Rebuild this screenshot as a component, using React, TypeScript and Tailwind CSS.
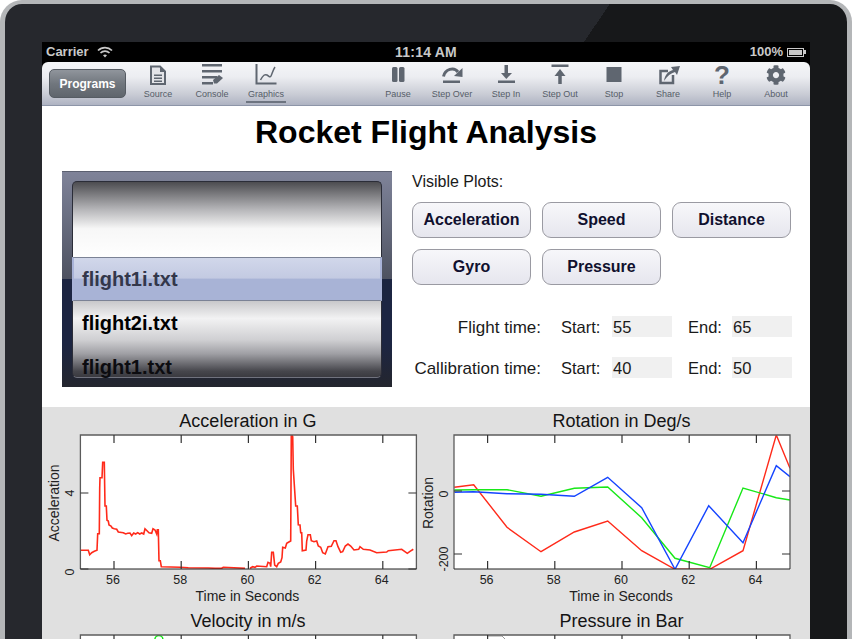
import type { ReactNode } from "react";
import { FaCog } from "react-icons/fa";

const toPlot = (pts: number[][], ox: number, oy: number) =>
  pts.map(([x, y]) => `${(ox + x / 3).toFixed(1)},${(oy + y / 3).toFixed(1)}`).join(" ");

// traced from the reference at 3x
const accelLeft = [[17,361],[40,361],[44,374],[50,368],[58,364],[66,361],[68,311],[73,311],[74,175],[75,143],[81,143],[83,97],[88,97],[90,228],[94,228],[96,271],[100,273],[102,285],[108,288],[112,294],[118,296],[125,298],[130,306],[145,308],[152,312],[158,310],[165,309],[170,317],[176,309],[182,312],[188,308],[194,312],[200,309],[206,312],[210,296],[216,302],[222,308],[230,310],[234,296],[240,300],[245,312],[247,299],[250,299],[252,392],[256,392],[259,410],[316,412],[340,413],[400,414],[420,415],[440,415],[445,412],[510,415]];
const accelRight = [[0,415],[8,410],[15,412],[20,408],[50,410],[54,397],[60,400],[62,410],[65,367],[70,367],[74,405],[80,410],[85,400],[92,396],[96,383],[98,352],[106,354],[110,340],[118,335],[122,333],[124,10],[128,20],[130,118],[137,228],[142,228],[145,284],[150,285],[152,308],[155,308],[157,362],[168,360],[170,333],[174,314],[181,314],[184,332],[192,335],[200,333],[205,348],[212,352],[218,368],[226,372],[234,350],[244,349],[252,332],[258,332],[264,350],[272,367],[278,365],[286,348],[294,342],[302,348],[312,360],[326,358],[330,350],[340,358],[360,360],[380,368],[410,366],[415,362],[455,358],[472,370],[480,364],[490,358]];
const rotRed = [[103,247],[161,239],[261,367],[363,440],[463,381],[563,348],[665,437],[765,493],[869,493],[969,437],[1069,90],[1110,190]];
const rotGreen = [[103,255],[161,254],[261,254],[363,274],[463,250],[563,246],[665,338],[765,460],[869,488],[969,249],[1069,278],[1110,285]];
const rotBlue = [[103,262],[161,260],[261,266],[363,268],[463,274],[563,217],[665,308],[765,493],[866,302],[969,413],[1069,182],[1110,215]];

interface PlotProps {
  title: string;
  left: number;
  yLabel?: string;
  yTicks?: { y: number; label: string; labelY: number }[];
  xLabels?: boolean;
  children?: ReactNode;
}

const Plot = ({ title, left, yLabel, yTicks = [], xLabels = true, children }: PlotProps) => {
  const xs = [56, 58, 60, 62, 64];
  return (
    <svg width="384" height="200" className="block overflow-visible" fontFamily="'Liberation Sans', sans-serif">
      <text x={left + 167.5} y="20" fontSize="18" textAnchor="middle" fill="#141414">{title}</text>
      <rect x={left} y="28" width="336" height="134" fill="#fff" />
      <svg x={left} y="28" width="336" height="134">{children}</svg>
      <path d={`M${left} 162V28H${left + 336}V162`} fill="none" stroke="#5c5c5c" strokeWidth="1.3" />
      <path d={`M${left} 162H${left + 336}`} stroke="#222" strokeWidth="1.2" />
      {xs.map((v, i) => {
        const x = left + 33.6 + i * 67.2;
        return (
          <g key={v}>
            <path d={`M${x} 28v8M${x} 162v-8`} stroke="#333" strokeWidth="1.2" />
            {xLabels && <text x={x - 1} y="177" fontSize="12.5" textAnchor="middle" fill="#222">{v}</text>}
          </g>
        );
      })}
      {yTicks.map((t) => (
        <g key={t.label}>
          <path d={`M${left} ${t.y}h8M${left + 336} ${t.y}h-8`} stroke="#333" strokeWidth="1.2" />
          <text transform={`translate(${left - 6} ${t.labelY}) rotate(-90)`} fontSize="12.5" textAnchor="middle" fill="#222">{t.label}</text>
        </g>
      ))}
      {yLabel && <text transform={`translate(${left - 21} 96) rotate(-90)`} fontSize="14" textAnchor="middle" fill="#222">{yLabel}</text>}
      {xLabels && <text x={left + 167} y="194" fontSize="14" textAnchor="middle" fill="#222">Time in Seconds</text>}
    </svg>
  );
};

const ToolIcon = ({ children }: { children: ReactNode }) => (
  <svg width="24" height="24" viewBox="0 0 24 24" fill="#5f6670" className="overflow-visible">{children}</svg>
);

const ToolItem = ({ label, active, children }: { label: string; active?: boolean; children: ReactNode }) => (
  <div className="flex w-[54px] flex-col items-center">
    <div className="flex h-[24px] w-[24px] items-center justify-center">{children}</div>
    <span className={`mt-[1px] whitespace-nowrap text-[9px] leading-[13px] text-[#565d68] ${active ? "border-b-2 border-[#6d7480] px-[2px]" : ""}`}>{label}</span>
  </div>
);

const StatusBar = () => (
  <div className="flex h-[20px] items-center bg-black px-[4px] text-[13px] font-bold text-[#c9c9c9]">
    <div className="flex flex-1 items-center gap-[8px]">
      <span>Carrier</span>
      <svg width="16" height="12" viewBox="0 0 16 12" fill="none" stroke="#c9c9c9" strokeWidth="1.7">
        <path d="M1 4.5a10 10 0 0 1 14 0M3.5 7a6.5 6.5 0 0 1 9 0" />
        <path d="M6 9.3a3 3 0 0 1 4 0L8 11.5z" fill="#c9c9c9" stroke="none" />
      </svg>
    </div>
    <span className="text-[14px] tracking-[0.2px]">11:14 AM</span>
    <div className="flex flex-1 items-center justify-end gap-[4px]">
      <span>100%</span>
      <div className="flex items-center">
        <div className="h-[9px] w-[17px] border border-[#c9c9c9] p-[1px]"><div className="h-full bg-[#c9c9c9]" /></div>
        <div className="h-[4px] w-[2px] bg-[#c9c9c9]" />
      </div>
    </div>
  </div>
);

const Toolbar = () => (
  <div className="h-[44px] bg-black">
    <div className="flex h-[44px] items-start rounded-t-[6px] border-b border-[#8d95a8] bg-[linear-gradient(#f5f6f8,#ecedf1_35%,#c9ccd5_75%,#aeb3c2)] pl-[7px] pr-[7px] pt-[1px]">
      <button className="mr-[5px] mt-[6px] flex h-[29px] w-[77px] items-center justify-center rounded-[5px] border border-[#565c63] bg-[linear-gradient(#90959c,#71777e_50%,#5f656c)] text-[12px] font-bold text-white">Programs</button>
      <ToolItem label="Source">
        <ToolIcon>
          <path d="M5 3.5h9l5 5V21H5z" fill="#e3e4e8" stroke="#5f6670" strokeWidth="2" />
          <path d="M14 3v6h6z" />
          <rect x="8" y="11.5" width="8" height="1.5" /><rect x="8" y="14.5" width="8" height="1.5" /><rect x="8" y="17.5" width="8" height="1.5" />
        </ToolIcon>
      </ToolItem>
      <ToolItem label="Console">
        <ToolIcon>
          <rect x="2" y="1" width="20" height="2.5" /><rect x="2" y="7" width="20" height="2.5" /><rect x="2" y="13" width="15" height="2.5" /><rect x="2" y="19" width="11" height="2.5" />
          <polygon points="14,20.5 13,17 19,12 23,15 17,20.5" />
        </ToolIcon>
      </ToolItem>
      <ToolItem label="Graphics" active>
        <ToolIcon>
          <path d="M2.5 1v19.5h20" fill="none" stroke="#5f6670" strokeWidth="2" />
          <path d="M6.5 17C9 12 11 11 13 12s3 3 4 1 2-6 4-9" fill="none" stroke="#5f6670" strokeWidth="1.5" />
        </ToolIcon>
      </ToolItem>
      <div className="flex-1" />
      <ToolItem label="Pause">
        <ToolIcon><rect x="6" y="4" width="5.5" height="15" rx="1.5" /><rect x="13" y="4" width="5.5" height="15" rx="1.5" /></ToolIcon>
      </ToolItem>
      <ToolItem label="Step Over">
        <ToolIcon>
          <path d="M3.5 13.5C5 6 14 3.5 18 9" fill="none" stroke="#5f6670" strokeWidth="3" />
          <polygon points="22.5,5 22.5,14 14,13" />
          <rect x="3" y="17.5" width="17" height="2.5" />
        </ToolIcon>
      </ToolItem>
      <ToolItem label="Step In">
        <ToolIcon>
          <rect x="10.5" y="2" width="3.5" height="9" /><polygon points="7,10 18,10 12.3,16" /><rect x="4" y="17.5" width="17" height="2.5" />
        </ToolIcon>
      </ToolItem>
      <ToolItem label="Step Out">
        <ToolIcon>
          <rect x="3.5" y="1.5" width="17" height="2.5" /><polygon points="12,6 17.5,13 6.5,13" /><rect x="10.25" y="12" width="3.5" height="9" />
        </ToolIcon>
      </ToolItem>
      <ToolItem label="Stop">
        <ToolIcon><rect x="4.5" y="4" width="15" height="15" /></ToolIcon>
      </ToolItem>
      <ToolItem label="Share">
        <ToolIcon>
          <path d="M17 12v8H4.5V8H12" fill="none" stroke="#5f6670" strokeWidth="2.5" />
          <path d="M8 18C9 11 13 8 17 7l-2-3 9-1-3 9-2-3c-4 1-8 4-11 9z" />
        </ToolIcon>
      </ToolItem>
      <ToolItem label="Help">
        <span className="text-[26px] font-bold leading-[24px] text-[#5f6670]">?</span>
      </ToolItem>
      <ToolItem label="About">
        <FaCog size={20} color="#5f6670" />
      </ToolItem>
    </div>
  </div>
);

const PlotButton = ({ label }: { label: string }) => (
  <button className="h-[36px] rounded-[9px] border border-[#9a9aa2] bg-[linear-gradient(#f7f7fa,#e6e6ee)] text-[16px] font-bold text-[#10102e]">{label}</button>
);

const TimeRow = ({ label, start, end }: { label: string; start: string; end: string }) => (
  <div className="flex h-[21px] items-center text-[16.5px] text-[#1a1a1a]">
    <span className="w-[129px] whitespace-nowrap pt-[2px] text-right text-[17px]">{label}</span>
    <span className="ml-[20px] w-[40px] pt-[2px]">Start:</span>
    <span className="ml-[11px] flex h-full w-[60px] items-center bg-[#f0f0f0] pl-[1px] pt-[2px]">{start}</span>
    <span className="ml-[16px] w-[34px] pt-[2px]">End:</span>
    <span className="ml-[10px] flex h-full w-[60px] items-center bg-[#f0f0f0] pl-[1px] pt-[2px]">{end}</span>
  </div>
);

const Picker = () => (
  <div className="h-[216px] w-[330px] shrink-0 border-t border-[#5b6070] bg-[linear-gradient(#7f8399,#6b7083_20%,#4d5160_50%,#1c2542_50%,#1c2542_80%,#24262e)] px-[10px] pb-[9px] pt-[9px]">
    <div className="relative h-[197px] rounded-[5px] border border-[#2b2d38] border-b-[#70727e] bg-[linear-gradient(#4c4c50,#b5b5b8_14%,#f7f7f7_24%,#ffffff_40%,#ffffff_56%,#c8c8ca_61%,#f2f2f3_70%,#cfcfd2_81%,#a0a0a5_88%,#46464c_97%,#3a3a40)]">
      <div className="h-[75px]" />
      <div className="flex h-[44px] items-center pl-[9px] text-[20px] font-bold text-[#2e3244]">flight1i.txt</div>
      <div className="flex h-[44px] items-center pl-[9px] text-[20px] font-bold text-black">flight2i.txt</div>
      <div className="flex h-[33px] items-start overflow-hidden pl-[9px] pt-[11px] text-[20px] font-bold leading-[22px] text-[#0c0c10]">flight1.txt</div>
      <div className="absolute -left-px -right-px top-[75px] flex h-[44px] items-center border-y border-x-2 border-y-[#7b8295] border-x-[#a9b3d8] bg-[linear-gradient(#d1d7ea,#c3cae2_48%,#a8b3d6_50%,#a8b3d6)] pl-[8px] text-[20px] font-bold text-[#33374b]">flight1i.txt</div>
    </div>
  </div>
);

export default function App() {
  return (
    <div className="h-[639px] w-[852px] overflow-hidden bg-white font-['Liberation_Sans',sans-serif]">
      <div className="h-full rounded-t-[22px] border-x-[5px] border-t-[4px] border-[#b4b6b8] bg-[linear-gradient(124deg,#26282d_47.6%,#17181a_47.6%)] px-[37px] pt-[38px]">
        <StatusBar />
        <Toolbar />
        <div className="h-[301px] bg-white">
          <h1 className="mb-[13px] flex h-[52px] items-center justify-center text-[32px] font-bold text-black">Rocket Flight Analysis</h1>
          <div className="flex px-[20px]">
            <Picker />
            <div className="ml-[20px]">
              <div className="mb-[9px] h-[22px] text-[16px] leading-[22px] text-[#1a1a1a]">Visible Plots:</div>
              <div className="grid grid-cols-[119px_119px_119px] gap-x-[11px] gap-y-[11px]">
                <PlotButton label="Acceleration" />
                <PlotButton label="Speed" />
                <PlotButton label="Distance" />
                <PlotButton label="Gyro" />
                <PlotButton label="Pressure" />
              </div>
              <div className="mt-[31px] flex flex-col gap-[20px]">
                <TimeRow label="Flight time:" start="55" end="65" />
                <TimeRow label="Callibration time:" start="40" end="50" />
              </div>
            </div>
          </div>
        </div>
        <div className="grid h-[232px] grid-cols-2 overflow-hidden bg-[#e0e0e0]">
          <Plot title="Acceleration in G" left={38.4} yLabel="Acceleration" yTicks={[{ y: 86, label: "4", labelY: 86 }, { y: 162, label: "0", labelY: 165 }]}>
            <g fill="none" stroke="#ff2a1a" strokeWidth="1.6">
              <polyline points={toPlot(accelLeft, -5.4, -5)} />
              <polyline points={toPlot(accelRight, 169.6, -5)} />
            </g>
          </Plot>
          <Plot title="Rotation in Deg/s" left={28} yLabel="Rotation" yTicks={[{ y: 84, label: "0", labelY: 87 }, { y: 147, label: "-200", labelY: 152 }]}>
            <g fill="none" strokeWidth="1.4">
              <polyline points={toPlot(rotRed, -34, -30)} stroke="#ff2a1a" />
              <polyline points={toPlot(rotGreen, -34, -30)} stroke="#18e818" />
              <polyline points={toPlot(rotBlue, -34, -30)} stroke="#1444ff" />
            </g>
          </Plot>
          <Plot title="Velocity in m/s" left={38.4} xLabels={false}>
            <circle cx="78.5" cy="4.5" r="4" fill="none" stroke="#18e818" strokeWidth="1.5" />
          </Plot>
          <Plot title="Pressure in Bar" left={28} xLabels={false}>
            <path d="M34 1h14l3 3" fill="none" stroke="#999" strokeWidth="1" />
          </Plot>
        </div>
      </div>
    </div>
  );
}
